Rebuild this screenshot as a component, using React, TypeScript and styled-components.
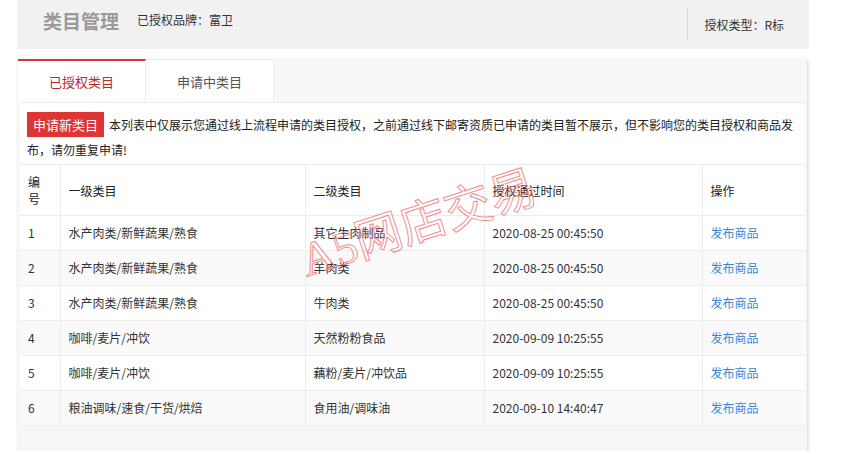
import React from 'react';
import styled, { createGlobalStyle } from 'styled-components';

const GlobalStyle = createGlobalStyle`
  body {
    margin: 0;
    background: #fff;
    font-family: "Noto Sans CJK SC", "Noto Sans", sans-serif;
    font-size: 12px;
    color: #333;
  }
`;

const Page = styled.div`
  padding-left: 17px;
  width: 792px;
`;

const Header = styled.div`
  display: flex;
  align-items: flex-start;
  height: 49px;
  background: #f1f1f1;
  padding-left: 26px;
  box-sizing: border-box;
`;

const Title = styled.h1`
  margin: 0 18px 0 0;
  font-size: 19px;
  font-weight: bold;
  color: #9a9a9a;
  line-height: 42px;
`;

const Brand = styled.span`
  flex: 1;
  font-size: 12px;
  color: #333;
  line-height: 40px;
`;

const AuthType = styled.div`
  height: 34px;
  display: flex;
  align-items: center;
  border-left: 1px solid #d6d6d6;
  padding: 0 25px 0 16px;
  margin-top: 7px;
  font-size: 12px;
  color: #333;
`;

const Card = styled.div`
  margin-top: 10px;
  width: 790px;
  background: #f6f6f6;
  box-shadow: 1px 1px 3px rgba(0, 0, 0, 0.18);
  padding-bottom: 25px;
  position: relative;
  overflow: hidden;
`;

const TabBar = styled.div`
  display: flex;
  height: 43px;
  background: #f8f8f8;
  border-top: 1px solid #ececec;
  margin-top: -1px;
`;

const Tab = styled.div<{ $active?: boolean }>`
  width: 128px;
  display: flex;
  align-items: center;
  justify-content: center;
  background: #fff;
  font-size: 13px;
  color: ${({ $active }) => ($active ? '#b8292e' : '#555')};
  border-top: ${({ $active }) => ($active ? '2px solid #d6393c' : '1px solid #ececec')};
  border-right: 1px solid #ececec;
  box-sizing: border-box;
  margin-left: ${({ $active }) => ($active ? '1px' : '0')};
`;

const Panel = styled.div`
  margin: 0 2px 0 3px;
  background: #fff;
  border-top: 1px solid #ececec;
`;

const Notice = styled.div`
  padding: 9px 6px 2px 7px;
  line-height: 25px;
  font-size: 12px;
  color: #222;
`;

const ApplyButton = styled.span`
  display: inline-block;
  height: 25px;
  line-height: 25px;
  padding: 0 6px;
  margin-right: 5px;
  background: #de3434;
  color: #fff;
  font-size: 13px;
  vertical-align: top;
`;

const Table = styled.table`
  width: 100%;
  border-collapse: collapse;
  table-layout: fixed;
`;

const Th = styled.th<{ $w: number }>`
  width: ${({ $w }) => $w}px;
  box-sizing: border-box;
  text-align: left;
  font-weight: normal;
  font-size: 12px;
  color: #222;
  line-height: 17px;
  padding: 8px 8px;
  border: 1px solid #ececec;
  border-left: none;
  word-break: break-all;
  &:last-child {
    border-right: none;
  }
`;

const Tr = styled.tr<{ $striped?: boolean }>`
  background: ${({ $striped }) => ($striped ? '#fafafa' : '#fff')};
`;

const Td = styled.td`
  font-size: 12px;
  color: #333;
  line-height: 18px;
  padding: 8px 8px;
  border: 1px solid #ececec;
  border-left: none;
  white-space: nowrap;
  overflow: hidden;
  &:last-child {
    border-right: none;
  }
`;

const Link = styled.a`
  color: #3a86d6;
  text-decoration: none;
  cursor: pointer;
`;

const Watermark = styled.div`
  position: absolute;
  left: 294px;
  top: 162px;
  font-family: "Liberation Serif", "Noto Sans CJK SC", serif;
  font-size: 47px;
  color: transparent;
  -webkit-text-stroke: 1px #f07c7c;
  transform: rotate(-18deg);
  transform-origin: left bottom;
  pointer-events: none;
  white-space: nowrap;
  opacity: 0.85;
`;

const rows = [
  ['1', '水产肉类/新鲜蔬果/熟食', '其它生肉制品', '2020-08-25 00:45:50'],
  ['2', '水产肉类/新鲜蔬果/熟食', '羊肉类', '2020-08-25 00:45:50'],
  ['3', '水产肉类/新鲜蔬果/熟食', '牛肉类', '2020-08-25 00:45:50'],
  ['4', '咖啡/麦片/冲饮', '天然粉粉食品', '2020-09-09 10:25:55'],
  ['5', '咖啡/麦片/冲饮', '藕粉/麦片/冲饮品', '2020-09-09 10:25:55'],
  ['6', '粮油调味/速食/干货/烘焙', '食用油/调味油', '2020-09-10 14:40:47'],
];

export default function App() {
  return (
    <>
      <GlobalStyle />
      <Page>
        <Header>
          <Title>类目管理</Title>
          <Brand>已授权品牌：富卫</Brand>
          <AuthType>授权类型：R标</AuthType>
        </Header>
        <Card>
          <TabBar>
            <Tab $active>已授权类目</Tab>
            <Tab>申请中类目</Tab>
          </TabBar>
          <Panel>
            <Notice>
              <ApplyButton>申请新类目</ApplyButton>
              本列表中仅展示您通过线上流程申请的类目授权，之前通过线下邮寄资质已申请的类目暂不展示，但不影响您的类目授权和商品发布，请勿重复申请!
            </Notice>
            <Table>
              <thead>
                <tr>
                  <Th $w={40}>编号</Th>
                  <Th $w={245}>一级类目</Th>
                  <Th $w={179}>二级类目</Th>
                  <Th $w={218}>授权通过时间</Th>
                  <Th $w={103}>操作</Th>
                </tr>
              </thead>
              <tbody>
                {rows.map((r, i) => (
                  <Tr key={r[0]} $striped={i % 2 === 1}>
                    <Td>{r[0]}</Td>
                    <Td>{r[1]}</Td>
                    <Td>{r[2]}</Td>
                    <Td>{r[3]}</Td>
                    <Td>
                      <Link>发布商品</Link>
                    </Td>
                  </Tr>
                ))}
              </tbody>
            </Table>
          </Panel>
          <Watermark>A5网店交易</Watermark>
        </Card>
      </Page>
    </>
  );
}
